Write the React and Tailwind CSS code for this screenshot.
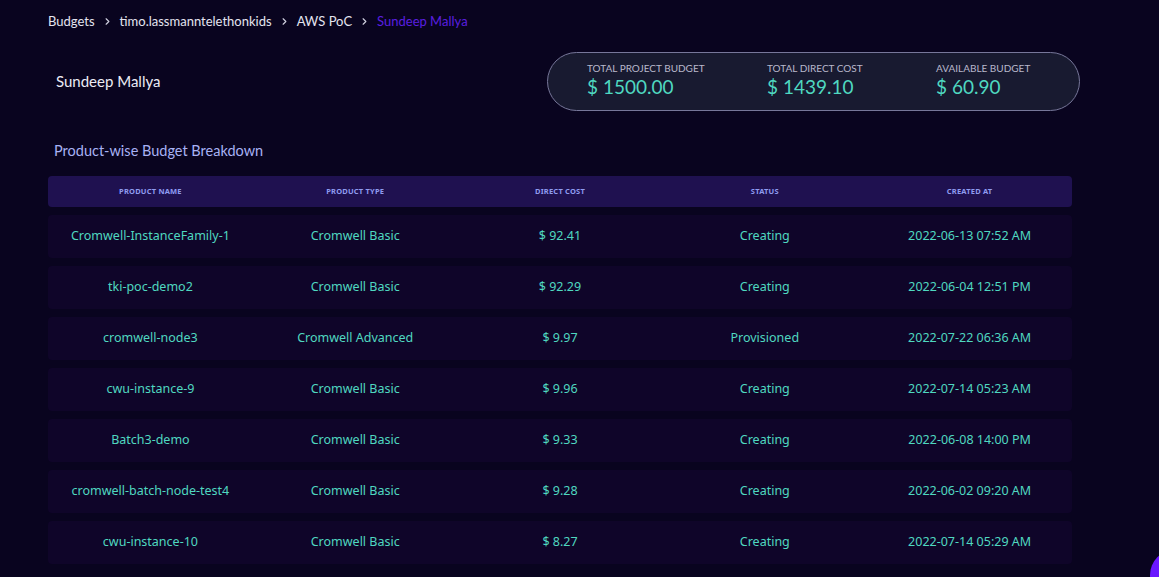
import { ChevronRight } from 'lucide-react'

const ROWS = [
  ['Cromwell-InstanceFamily-1', 'Cromwell Basic', '$ 92.41', 'Creating', '2022-06-13 07:52 AM'],
  ['tki-poc-demo2', 'Cromwell Basic', '$ 92.29', 'Creating', '2022-06-04 12:51 PM'],
  ['cromwell-node3', 'Cromwell Advanced', '$ 9.97', 'Provisioned', '2022-07-22 06:36 AM'],
  ['cwu-instance-9', 'Cromwell Basic', '$ 9.96', 'Creating', '2022-07-14 05:23 AM'],
  ['Batch3-demo', 'Cromwell Basic', '$ 9.33', 'Creating', '2022-06-08 14:00 PM'],
  ['cromwell-batch-node-test4', 'Cromwell Basic', '$ 9.28', 'Creating', '2022-06-02 09:20 AM'],
  ['cwu-instance-10', 'Cromwell Basic', '$ 8.27', 'Creating', '2022-07-14 05:29 AM'],
]

const HEADERS = ['Product Name', 'Product Type', 'Direct Cost', 'Status', 'Created At']

export default function App() {
  return (
    <div className="min-h-screen bg-[#09041f] overflow-hidden font-['Lato',sans-serif] relative">
      {/* Breadcrumb */}
      <div className="flex items-center gap-[6px] pl-[48px] pt-[12px] text-[13px] text-[#e4e4f0]">
        <span>Budgets</span>
        <ChevronRight className="w-[11px] h-[11px] text-[#d0d0e0] mx-[1px]" strokeWidth={2.5} />
        <span>timo.lassmanntelethonkids</span>
        <ChevronRight className="w-[11px] h-[11px] text-[#d0d0e0] mx-[1px]" strokeWidth={2.5} />
        <span>AWS PoC</span>
        <ChevronRight className="w-[11px] h-[11px] text-[#d0d0e0] mx-[1px]" strokeWidth={2.5} />
        <span className="text-[#5a1fe0]">Sundeep Mallya</span>
      </div>

      {/* Title + summary */}
      <div className="flex items-center justify-between pl-[56px] pr-[79px] mt-[20px]">
        <h1 className="text-[15px] text-[#ececf5]">Sundeep Mallya</h1>
        <div className="w-[533px] h-[59px] rounded-full border border-[#77779a] bg-[#181a30] flex items-center pl-[39px]">
          {[
            ['Total Project Budget', '$ 1500.00', 'w-[180px]'],
            ['Total Direct Cost', '$ 1439.10', 'w-[169px]'],
            ['Available Budget', '$ 60.90', 'w-[120px]'],
          ].map(([label, value, w]) => (
            <div key={label} className={w}>
              <p className="text-[10px] uppercase text-[#b8b8cc] leading-[12px] -mt-[2px]">{label}</p>
              <p className="text-[19px] text-[#4fd8c0] leading-[24px] mt-[1px]">{value}</p>
            </div>
          ))}
        </div>
      </div>

      {/* Section title */}
      <h2 className="pl-[54px] mt-[29px] text-[14.5px] text-[#a8b2f4]">Product-wise Budget Breakdown</h2>

      {/* Table */}
      <div className="ml-[48px] w-[1024px] mt-[15px] font-['Noto_Sans',sans-serif]">
        <div className="grid grid-cols-5 h-[31px] items-center rounded-[4px] bg-[#1f1150]">
          {HEADERS.map(h => (
            <p key={h} className="text-center text-[7.5px] font-bold uppercase text-[#8f9cf0] tracking-[0.2px]">{h}</p>
          ))}
        </div>
        <div className="flex flex-col gap-[8px] mt-[8px]">
          {ROWS.map(r => (
            <div key={r[0]} className="grid grid-cols-5 h-[43px] items-center rounded-[4px] bg-[#0f0529]">
              {r.map((c, i) => (
                <p key={i} className="text-center text-[12.5px] text-[#4fd8c0]">{c}</p>
              ))}
            </div>
          ))}
        </div>
      </div>

      {/* Floating action circle */}
      <div className="absolute left-[1150px] top-[550px] w-[50px] h-[50px] rounded-full bg-[#6a17ff]" />
    </div>
  )
}
